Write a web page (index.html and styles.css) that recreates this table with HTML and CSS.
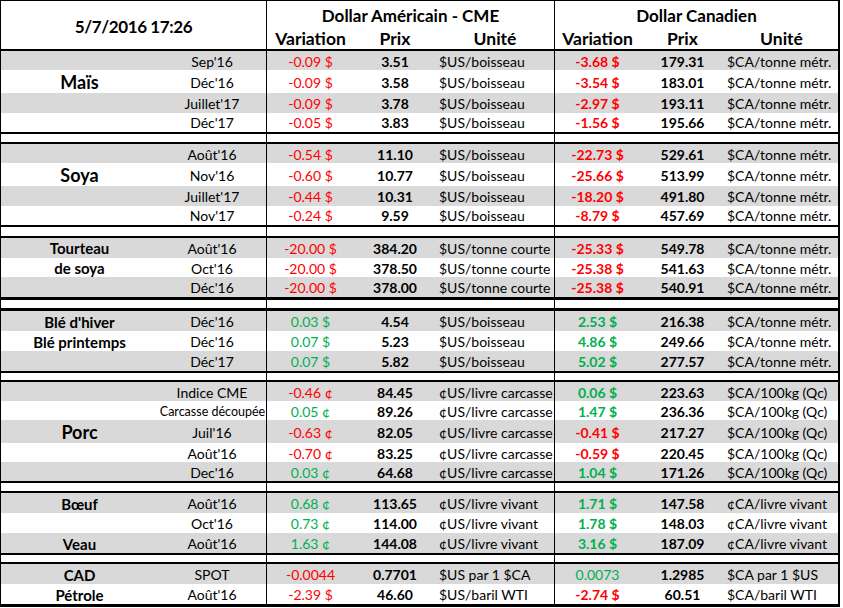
FILE: index.html
```html
<!DOCTYPE html>
<html lang="fr">
<head>
<meta charset="utf-8">
<title>Marchés 5/7/2016</title>
<link rel="stylesheet" href="styles.css">
</head>
<body>
<div class="sheet">
  <div class="head">
    <div class="title">5/7/2016 17:26</div>
    <div class="cur us">Dollar Américain - CME</div>
    <div class="cur ca">Dollar Canadien</div>
    <div class="sub">Variation</div>
    <div class="sub">Prix</div>
    <div class="sub edge">Unité</div>
    <div class="sub">Variation</div>
    <div class="sub">Prix</div>
    <div class="sub">Unité</div>
  </div>

  <div class="group mais">
    <div class="row"><div class="lab"></div><div class="ctr">Sep'16</div><div class="var neg">-0.09 $</div><div class="prix">3.51</div><div class="unit mid">$US/boisseau</div><div class="cvar neg">-3.68 $</div><div class="prix">179.31</div><div class="unit">$CA/tonne métr.</div></div>
    <div class="row"><div class="lab big">Maïs</div><div class="ctr">Déc'16</div><div class="var neg">-0.09 $</div><div class="prix">3.58</div><div class="unit mid">$US/boisseau</div><div class="cvar neg">-3.54 $</div><div class="prix">183.01</div><div class="unit">$CA/tonne métr.</div></div>
    <div class="row"><div class="lab"></div><div class="ctr">Juillet'17</div><div class="var neg">-0.09 $</div><div class="prix">3.78</div><div class="unit mid">$US/boisseau</div><div class="cvar neg">-2.97 $</div><div class="prix">193.11</div><div class="unit">$CA/tonne métr.</div></div>
    <div class="row"><div class="lab"></div><div class="ctr">Déc'17</div><div class="var neg">-0.05 $</div><div class="prix">3.83</div><div class="unit mid">$US/boisseau</div><div class="cvar neg">-1.56 $</div><div class="prix">195.66</div><div class="unit">$CA/tonne métr.</div></div>
  </div>
  <div class="row sep"><div></div><div class="ctr"></div><div></div><div></div><div class="unit mid"></div><div></div><div></div><div></div></div>

  <div class="group soya">
    <div class="row"><div class="lab"></div><div class="ctr">Août'16</div><div class="var neg">-0.54 $</div><div class="prix">11.10</div><div class="unit mid">$US/boisseau</div><div class="cvar neg">-22.73 $</div><div class="prix">529.61</div><div class="unit">$CA/tonne métr.</div></div>
    <div class="row"><div class="lab big">Soya</div><div class="ctr">Nov'16</div><div class="var neg">-0.60 $</div><div class="prix">10.77</div><div class="unit mid">$US/boisseau</div><div class="cvar neg">-25.66 $</div><div class="prix">513.99</div><div class="unit">$CA/tonne métr.</div></div>
    <div class="row"><div class="lab"></div><div class="ctr">Juillet'17</div><div class="var neg">-0.44 $</div><div class="prix">10.31</div><div class="unit mid">$US/boisseau</div><div class="cvar neg">-18.20 $</div><div class="prix">491.80</div><div class="unit">$CA/tonne métr.</div></div>
    <div class="row"><div class="lab"></div><div class="ctr">Nov'17</div><div class="var neg">-0.24 $</div><div class="prix">9.59</div><div class="unit mid">$US/boisseau</div><div class="cvar neg">-8.79 $</div><div class="prix">457.69</div><div class="unit">$CA/tonne métr.</div></div>
  </div>
  <div class="row sep wide"><div></div><div class="ctr"></div><div></div><div></div><div class="unit mid"></div><div></div><div></div><div></div></div>

  <div class="group tourteau">
    <div class="row"><div class="lab">Tourteau</div><div class="ctr">Août'16</div><div class="var neg">-20.00 $</div><div class="prix">384.20</div><div class="unit mid">$US/tonne courte</div><div class="cvar neg">-25.33 $</div><div class="prix">549.78</div><div class="unit">$CA/tonne métr.</div></div>
    <div class="row"><div class="lab">de soya</div><div class="ctr">Oct'16</div><div class="var neg">-20.00 $</div><div class="prix">378.50</div><div class="unit mid">$US/tonne courte</div><div class="cvar neg">-25.38 $</div><div class="prix">541.63</div><div class="unit">$CA/tonne métr.</div></div>
    <div class="row"><div class="lab"></div><div class="ctr">Déc'16</div><div class="var neg">-20.00 $</div><div class="prix">378.00</div><div class="unit mid">$US/tonne courte</div><div class="cvar neg">-25.38 $</div><div class="prix">540.91</div><div class="unit">$CA/tonne métr.</div></div>
  </div>
  <div class="row sep thick"><div></div><div class="ctr"></div><div></div><div></div><div class="unit mid"></div><div></div><div></div><div></div></div>

  <div class="group ble">
    <div class="row"><div class="lab">Blé d'hiver</div><div class="ctr">Déc'16</div><div class="var pos">0.03 $</div><div class="prix">4.54</div><div class="unit mid">$US/boisseau</div><div class="cvar pos">2.53 $</div><div class="prix">216.38</div><div class="unit">$CA/tonne métr.</div></div>
    <div class="row"><div class="lab">Blé printemps</div><div class="ctr">Déc'16</div><div class="var pos">0.07 $</div><div class="prix">5.23</div><div class="unit mid">$US/boisseau</div><div class="cvar pos">4.86 $</div><div class="prix">249.66</div><div class="unit">$CA/tonne métr.</div></div>
    <div class="row"><div class="lab"></div><div class="ctr">Déc'17</div><div class="var pos">0.07 $</div><div class="prix">5.82</div><div class="unit mid">$US/boisseau</div><div class="cvar pos">5.02 $</div><div class="prix">277.57</div><div class="unit">$CA/tonne métr.</div></div>
  </div>
  <div class="row sep narrow"><div></div><div class="ctr"></div><div></div><div></div><div class="unit mid"></div><div></div><div></div><div></div></div>

  <div class="group porc">
    <div class="row"><div class="lab"></div><div class="ctr">Indice CME</div><div class="var neg">-0.46 ¢</div><div class="prix">84.45</div><div class="unit mid">¢US/livre carcasse</div><div class="cvar pos">0.06 $</div><div class="prix">223.63</div><div class="unit">$CA/100kg (Qc)</div></div>
    <div class="row"><div class="lab"></div><div class="ctr small">Carcasse découpée</div><div class="var pos">0.05 ¢</div><div class="prix">89.26</div><div class="unit mid">¢US/livre carcasse</div><div class="cvar pos">1.47 $</div><div class="prix">236.36</div><div class="unit">$CA/100kg (Qc)</div></div>
    <div class="row"><div class="lab big">Porc</div><div class="ctr">Juil'16</div><div class="var neg">-0.63 ¢</div><div class="prix">82.05</div><div class="unit mid">¢US/livre carcasse</div><div class="cvar neg">-0.41 $</div><div class="prix">217.27</div><div class="unit">$CA/100kg (Qc)</div></div>
    <div class="row"><div class="lab"></div><div class="ctr">Août'16</div><div class="var neg">-0.70 ¢</div><div class="prix">83.25</div><div class="unit mid">¢US/livre carcasse</div><div class="cvar neg">-0.59 $</div><div class="prix">220.45</div><div class="unit">$CA/100kg (Qc)</div></div>
    <div class="row"><div class="lab"></div><div class="ctr">Dec'16</div><div class="var pos">0.03 ¢</div><div class="prix">64.68</div><div class="unit mid">¢US/livre carcasse</div><div class="cvar pos">1.04 $</div><div class="prix">171.26</div><div class="unit">$CA/100kg (Qc)</div></div>
  </div>
  <div class="row sep"><div></div><div class="ctr"></div><div></div><div></div><div class="unit mid"></div><div></div><div></div><div></div></div>

  <div class="group boeuf">
    <div class="row"><div class="lab">Bœuf</div><div class="ctr">Août'16</div><div class="var pos">0.68 ¢</div><div class="prix">113.65</div><div class="unit mid">¢US/livre vivant</div><div class="cvar pos">1.71 $</div><div class="prix">147.58</div><div class="unit">¢CA/livre vivant</div></div>
    <div class="row"><div class="lab"></div><div class="ctr">Oct'16</div><div class="var pos">0.73 ¢</div><div class="prix">114.00</div><div class="unit mid">¢US/livre vivant</div><div class="cvar pos">1.78 $</div><div class="prix">148.03</div><div class="unit">¢CA/livre vivant</div></div>
    <div class="row"><div class="lab">Veau</div><div class="ctr">Août'16</div><div class="var pos">1.63 ¢</div><div class="prix">144.08</div><div class="unit mid">¢US/livre vivant</div><div class="cvar pos">3.16 $</div><div class="prix">187.09</div><div class="unit">¢CA/livre vivant</div></div>
  </div>
  <div class="row sep narrow"><div></div><div class="ctr"></div><div></div><div></div><div class="unit mid"></div><div></div><div></div><div></div></div>

  <div class="group cad">
    <div class="row"><div class="lab">CAD</div><div class="ctr">SPOT</div><div class="var neg">-0.0044</div><div class="prix">0.7701</div><div class="unit mid">$US par 1 $CA</div><div class="cvar pos light">0.0073</div><div class="prix">1.2985</div><div class="unit">$CA par 1 $US</div></div>
    <div class="row"><div class="lab">Pétrole</div><div class="ctr">Août'16</div><div class="var neg">-2.39 $</div><div class="prix">46.60</div><div class="unit mid">$US/baril WTI</div><div class="cvar neg">-2.74 $</div><div class="prix">60.51</div><div class="unit">$CA/baril WTI</div></div>
  </div>
</div>
</body>
</html>
```

FILE: styles.css
```css
html, body {
  margin: 0;
  padding: 0;
  background: #ffffff;
}

body {
  font-family: Lato, "Liberation Sans", sans-serif;
  font-size: 14px;
  color: #000000;
}

.sheet {
  width: 840px;
  box-sizing: border-box;
  border-top: 1px solid #000;
  border-left: 1px solid #000;
  border-right: 2px solid #000;
  border-bottom: 3px solid #000;
}

.head,
.row {
  display: grid;
  grid-template-columns: 157px 109px 87px 82px 119px 85px 85px 113px;
}

.head {
  grid-template-rows: 27px 21px;
  border-bottom: 2px solid #000;
  font-weight: bold;
}

.head > div {
  display: flex;
  align-items: center;
  justify-content: center;
  white-space: nowrap;
}

.title {
  grid-column: 1 / 3;
  grid-row: 1 / 3;
  border-right: 1px solid #000;
  font-size: 17px;
  letter-spacing: -0.4px;
  padding-top: 3px;
}

.cur {
  font-size: 17px;
  padding-top: 2px;
}

.cur.us {
  grid-column: 3 / 6;
  border-right: 1px solid #000;
}

.cur.ca {
  grid-column: 6 / 9;
}

.sub {
  font-size: 17.5px;
}

.sub.edge {
  border-right: 1px solid #000;
}

.group {
  display: flex;
  flex-direction: column;
}

.group > .row {
  flex: 1;
}

.group > .row:nth-child(odd) {
  background: #d9d9d9;
}

.mais { height: 81px; }
.soya { height: 81px; }
.tourteau { height: 59px; }
.ble { height: 60px; }
.porc { height: 99px; }
.boeuf { height: 60px; }
.cad { height: 40px; }

.sep {
  height: 8px;
  border-top: 2px solid #000;
  border-bottom: 2px solid #000;
}

.sep.wide { height: 9px; }
.sep.narrow { height: 7px; }

.sep.thick {
  height: 8px;
  border-top-width: 3px;
  border-bottom-width: 3px;
}

.row > div {
  display: flex;
  align-items: center;
  justify-content: center;
  white-space: nowrap;
  padding-top: 1px;
}

.lab {
  font-weight: bold;
  font-size: 15px;
}

.lab.big {
  font-size: 18px;
}

.ctr {
  border-right: 1px solid #000;
}

.ctr.small {
  font-size: 12.5px;
  padding-left: 1px;
}

.prix {
  font-weight: bold;
}

.cvar {
  font-weight: bold;
}

.cvar.light {
  font-weight: normal;
}

.neg { color: #ff0000; }
.pos { color: #00b050; }

.row > .unit {
  justify-content: flex-start;
  padding-left: 2px;
}

.row > .unit.mid {
  padding-left: 3px;
  border-right: 1px solid #000;
}
```
